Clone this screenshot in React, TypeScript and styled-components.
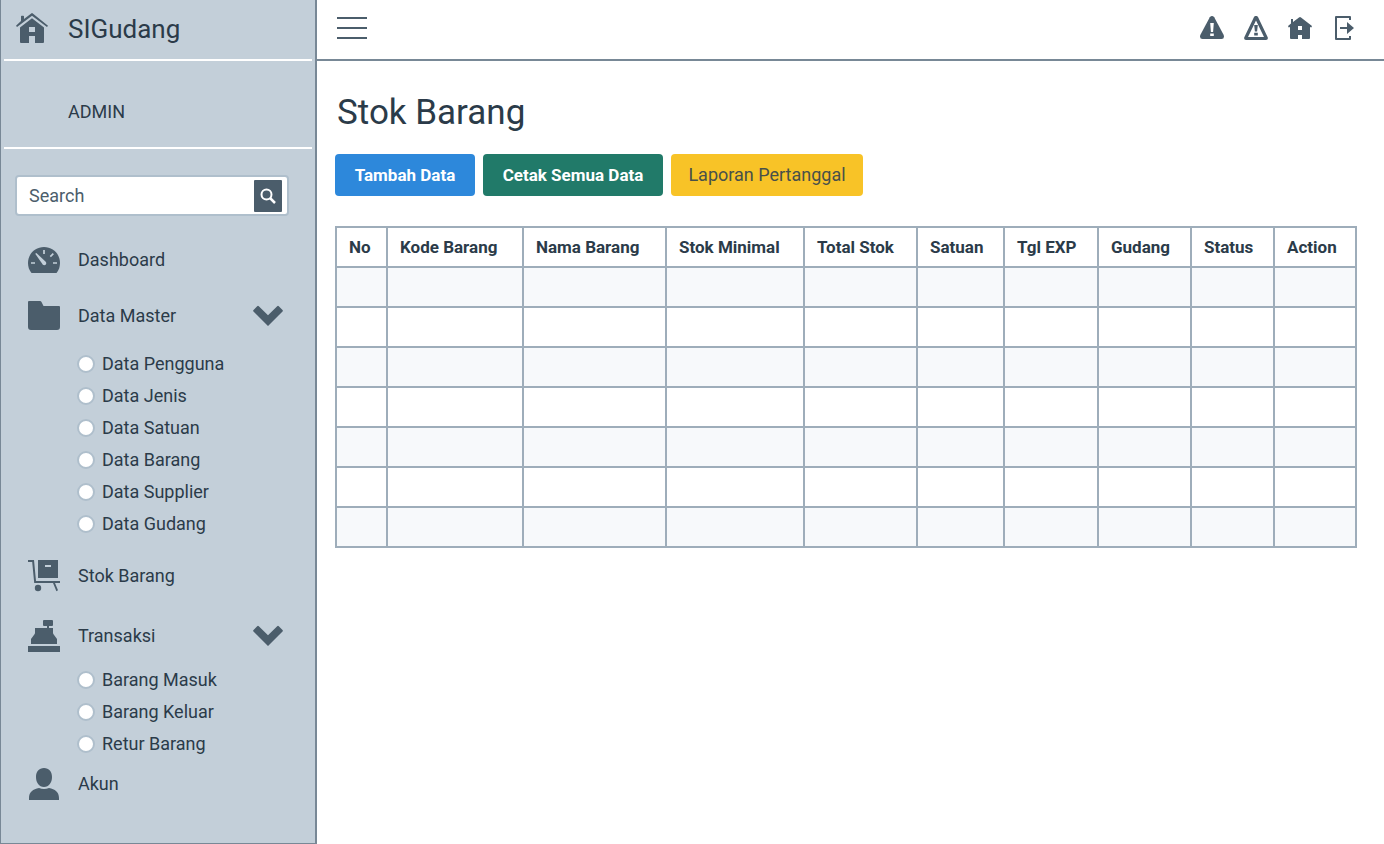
import React from "react";
import styled, { createGlobalStyle } from "styled-components";

const ink = "#2b3b49";
const slate = "#4b5d6b";
const line = "#788896";
const grid = "#9eadba";
const panel = "#c3cfd9";

const GlobalStyle = createGlobalStyle`
  *, *::before, *::after { box-sizing: border-box; }
  body { margin: 0; background: #fff; color: ${ink}; font: 18px/24px Roboto, "Liberation Sans", sans-serif; }
  button, input { font: inherit; color: inherit; }
  a { color: inherit; text-decoration: none; }
  h1 { margin: 0; font-weight: 400; }
  svg { display: block; }
`;

const Page = styled.div`
  display: flex;
  min-height: 100vh;
`;

const Sidebar = styled.aside`
  flex: 0 0 317px;
  min-width: 0;
  background: ${panel};
  border: solid ${line};
  border-width: 0 2px 1px 1px;
`;

const Block = styled.div<{ $tall?: boolean }>`
  display: flex;
  align-items: center;
  height: ${(p) => (p.$tall ? 88 : 61)}px;
  margin: 0 3px;
  padding: ${(p) => (p.$tall ? "16px 0 0 64px" : "0 0 1px 12px")};
  border-bottom: 2px solid #fff;
`;

const Brand = styled.a`
  display: flex;
  align-items: center;
  gap: 20px;
  font-size: 26px;
  line-height: 34px;
`;

const SearchBox = styled.form`
  display: flex;
  align-items: center;
  height: 41px;
  margin: 26px 26px 0 14px;
  padding: 0 5px 0 12px;
  background: #fff;
  border: 2px solid #afbfcc;
  border-radius: 4px;
`;

const SearchInput = styled.input`
  flex: 1;
  min-width: 0;
  padding: 0;
  border: 0;
  outline: 0;
  background: none;
  &::placeholder { color: ${slate}; opacity: 1; }
`;

const SearchButton = styled.button`
  display: grid;
  place-items: center;
  width: 28px;
  height: 32px;
  padding: 0;
  border: 0;
  border-radius: 1px;
  background: ${slate};
`;

const Nav = styled.nav`
  padding: 24px 31px 24px 27px;
`;

const NavLink = styled.a`
  display: grid;
  grid-template-columns: 32px 1fr 32px;
  column-gap: 18px;
  align-items: center;
  height: 40px;
`;

const NavGroup = styled.section<{ $gap: number }>`
  margin-bottom: ${(p) => p.$gap}px;
`;

const Choices = styled.div<{ $top: number }>`
  padding: ${(p) => p.$top}px 0 0 49px;
`;

const Choice = styled.label`
  display: flex;
  align-items: center;
  gap: 7px;
  height: 32px;
`;

const Radio = styled.input`
  appearance: none;
  width: 18px;
  height: 18px;
  margin: 0;
  border: 2px solid #afbfcc;
  border-radius: 50%;
  background: #fff;
  &:checked { background: ${slate}; }
`;

const Main = styled.main`
  flex: 1;
  min-width: 0;
`;

const TopBar = styled.header`
  display: flex;
  align-items: center;
  justify-content: space-between;
  height: 61px;
  padding: 0 28px 4px 20px;
  border-bottom: 2px solid ${line};
`;

const IconButton = styled.button`
  display: block;
  padding: 0;
  border: 0;
  background: none;
`;

const Tools = styled.div`
  display: flex;
  gap: 20px;
`;

const Content = styled.div`
  padding: 30px 27px 28px 18px;
`;

const Title = styled.h1`
  padding-left: 2px;
  font-size: 35px;
  line-height: 44px;
`;

const Actions = styled.div`
  display: flex;
  gap: 8px;
  margin: 19px 0 30px;
`;

const tones = {
  blue: ["#2d88db", "#fff", 700, 17],
  green: ["#217a69", "#fff", 700, 17],
  yellow: ["#f8c327", "#48504a", 400, 18],
} as const;

const ActionButton = styled.button<{ $tone: keyof typeof tones; $width: number }>`
  width: ${(p) => p.$width}px;
  height: 42px;
  padding: 0;
  border: 0;
  border-radius: 4px;
  background: ${(p) => tones[p.$tone][0]};
  color: ${(p) => tones[p.$tone][1]};
  font-weight: ${(p) => tones[p.$tone][2]};
  font-size: ${(p) => tones[p.$tone][3]}px;
`;

const Table = styled.table`
  width: 100%;
  table-layout: fixed;
  border-collapse: collapse;
`;

const HeadCell = styled.th`
  height: 40px;
  padding: 0 0 0 12px;
  border: 2px solid ${grid};
  text-align: left;
  white-space: nowrap;
  font-size: 17px;
`;

const Row = styled.tr`
  &:nth-child(odd) { background: #f7f9fb; }
`;

const Cell = styled.td`
  height: 40px;
  padding: 0;
  border: 2px solid ${grid};
`;

const Icon = ({ size = 32, children }: { size?: number; children: React.ReactNode }) => (
  <svg width={size} height={size} viewBox={`0 0 ${size} ${size}`} fill={slate} aria-hidden="true">
    {children}
  </svg>
);

const BrandIcon = () => (
  <Icon>
    <path d="M5 8V3.5q0-.7.7-.7h1.6q.7 0 .7.7V6l7.2-5.6q.8-.6 1.6 0L32 12.700 31 14 16 2.700 1 14 0 12.700Z" />
    <path fillRule="evenodd" d="M4 14.500 16 5.200l12 9.300V29q0 1-1 1h-8v-7h-6v7H5q-1 0-1-1ZM13 14v5h6v-5Z" />
  </Icon>
);

const GaugeIcon = () => (
  <Icon>
    <path d="M3.500 29C1.200 26 0 23 0 19 0 10 7 3 16 3s16 7 16 16c0 4-1.200 7-3.500 10Z" />
    <g stroke={panel} strokeWidth="1.700" fill="none">
      <path d="M16 6v4M3 19h4M25 19h4M22.300 12.700l3-3" />
    </g>
    <path fill={panel} d="m7.200 9.700 1.200-.7 9.300 8.800q1 1.200.2 2.700-1.500 1.200-3 .2Z" />
  </Icon>
);

const FolderIcon = () => (
  <Icon>
    <path d="M0 2q0-1 1-1h11q1 0 1.500 1l2 4H31q1 0 1 1v20q0 3-3 3H3q-3 0-3-3Z" />
  </Icon>
);

const CartIcon = () => (
  <Icon>
    <path d="M0 0h6l2 21h24v2H6.200L4.200 2H0ZM25 23h2l3 7.300-1.600.9Z" />
    <path fillRule="evenodd" d="M10 0h20v18H10Zm7 5v2h6V5Z" />
    <circle cx="10" cy="28" r="3.200" />
  </Icon>
);

const RegisterIcon = () => (
  <Icon>
    <path d="M16 0h8q1 0 1 1v4q0 1-1 1h-3v2h4v5q0 .6.500 1.200L29 19v5H3v-5l3.500-4.800Q7 13.600 7 13V8h12V6h-3q-1 0-1-1V1q0-1 1-1ZM0 26h32v6H0Z" />
  </Icon>
);

const UserIcon = () => (
  <Icon>
    <path d="M16 0c5 0 8 3.500 8 9s-3 10-8 10-8-4.500-8-10 3-9 8-9ZM1 32v-2c0-6 4-9 10-10q5 2 10 0c6 1 10 4 10 10v2Z" />
  </Icon>
);

const Chevron = () => (
  <Icon>
    <path d="M1.500 11.500q-.8-.8 0-1.600l3.700-3.700q.8-.8 1.600 0L16 15.200l9.200-9q.8-.8 1.600 0l3.700 3.700q.8.800 0 1.600L16 26Z" />
  </Icon>
);

const AlertSolidIcon = () => (
  <Icon size={24}>
    <path d="M9.800 1.300q2.200-2.600 4.400 0L23.700 19Q24.800 23 21.500 23h-19Q-.8 23 .3 19Z" />
    <path fill="#fff" d="M10.200 7h3.600l-.7 9h-2.200ZM10.200 17.500h3.600V20h-3.600Z" />
  </Icon>
);

const AlertOutlineIcon = () => (
  <Icon size={24}>
    <path fillRule="evenodd" d="M10 1q2-2.200 4 0l9.800 20.500Q24.300 24 22 24H2Q-.3 24 .2 21.500ZM12 4.500 4 21h16Z" />
    <path d="M10.200 9h3.600l-.7 6.500h-2.200ZM10.200 16.800h3.600v2.700h-3.600Z" />
  </Icon>
);

const HomeIcon = () => (
  <Icon size={24}>
    <path
      fillRule="evenodd"
      d="M3 3h2v3l6-4.600q1-.8 2 0L24 10l-.7 1.500L22 11v11q0 1-1 1h-7v-4h-4v4H3q-1 0-1-1V11l-1.300.5L0 10l3-2.400ZM10 10v4h4v-4Z"
    />
  </Icon>
);

const ExitIcon = () => (
  <Icon size={24}>
    <path d="M4 0h14q1 0 1 1v3h-2V2H5v20h12v-2h2v3q0 1-1 1H4q-1 0-1-1V1q0-1 1-1ZM8 11h7V6l7 6-7 6v-5H8Z" />
  </Icon>
);

const NavRow = ({ icon, text, open }: { icon: React.ReactNode; text: string; open?: boolean }) => (
  <NavLink href="#">
    {icon}
    <span>{text}</span>
    {open && <Chevron />}
  </NavLink>
);

const ChoiceList = ({ name, items, top }: { name: string; items: string[]; top: number }) => (
  <Choices $top={top}>
    {items.map((item) => (
      <Choice key={item}>
        <Radio type="radio" name={name} />
        {item}
      </Choice>
    ))}
  </Choices>
);

const master = ["Data Pengguna", "Data Jenis", "Data Satuan", "Data Barang", "Data Supplier", "Data Gudang"];
const transactions = ["Barang Masuk", "Barang Keluar", "Retur Barang"];

const columns: [string, number][] = [
  ["No", 51], ["Kode Barang", 136], ["Nama Barang", 143], ["Stok Minimal", 138], ["Total Stok", 113],
  ["Satuan", 87], ["Tgl EXP", 94], ["Gudang", 93], ["Status", 83], ["Action", 82],
];
const total = columns.reduce((sum, [, width]) => sum + width, 0);

const tools: [string, React.ReactNode][] = [
  ["Stok minimum", <AlertSolidIcon />],
  ["Peringatan", <AlertOutlineIcon />],
  ["Beranda", <HomeIcon />],
  ["Keluar", <ExitIcon />],
];

export default function App() {
  return (
    <Page>
      <GlobalStyle />
      <Sidebar>
        <Block>
          <Brand href="#"><BrandIcon />SIGudang</Brand>
        </Block>
        <Block $tall>ADMIN</Block>
        <SearchBox onSubmit={(e) => e.preventDefault()}>
          <SearchInput type="text" placeholder="Search" aria-label="Search" />
          <SearchButton aria-label="Cari">
            <svg width="16" height="16" viewBox="0 0 16 16" fill="none" stroke="#fff">
              <circle cx="6.500" cy="6.500" r="5" strokeWidth="2" />
              <path d="m10 10 5 5" strokeWidth="2.500" />
            </svg>
          </SearchButton>
        </SearchBox>
        <Nav>
          <NavGroup $gap={16}><NavRow icon={<GaugeIcon />} text="Dashboard" /></NavGroup>
          <NavGroup $gap={16}>
            <NavRow icon={<FolderIcon />} text="Data Master" open />
            <ChoiceList name="master" items={master} top={12} />
          </NavGroup>
          <NavGroup $gap={20}><NavRow icon={<CartIcon />} text="Stok Barang" /></NavGroup>
          <NavGroup $gap={4}>
            <NavRow icon={<RegisterIcon />} text="Transaksi" open />
            <ChoiceList name="transaksi" items={transactions} top={8} />
          </NavGroup>
          <NavRow icon={<UserIcon />} text="Akun" />
        </Nav>
      </Sidebar>
      <Main>
        <TopBar>
          <IconButton aria-label="Menu">
            <svg width="30" height="22" viewBox="0 0 30 22" stroke={slate} strokeWidth="2" aria-hidden="true">
              <path d="M0 1h30M0 11h30M0 21h30" />
            </svg>
          </IconButton>
          <Tools>
            {tools.map(([label, icon]) => (
              <IconButton key={label} aria-label={label}>{icon}</IconButton>
            ))}
          </Tools>
        </TopBar>
        <Content>
          <Title>Stok Barang</Title>
          <Actions>
            <ActionButton $tone="blue" $width={140}>Tambah Data</ActionButton>
            <ActionButton $tone="green" $width={180}>Cetak Semua Data</ActionButton>
            <ActionButton $tone="yellow" $width={192}>Laporan Pertanggal</ActionButton>
          </Actions>
          <Table>
            <colgroup>
              {columns.map(([name, width]) => (
                <col key={name} style={{ width: `${(width / total) * 100}%` }} />
              ))}
            </colgroup>
            <thead>
              <tr>{columns.map(([name]) => <HeadCell key={name} scope="col">{name}</HeadCell>)}</tr>
            </thead>
            <tbody>
              {Array.from({ length: 7 }, (_, row) => (
                <Row key={row}>{columns.map(([name]) => <Cell key={name} />)}</Row>
              ))}
            </tbody>
          </Table>
        </Content>
      </Main>
    </Page>
  );
}
